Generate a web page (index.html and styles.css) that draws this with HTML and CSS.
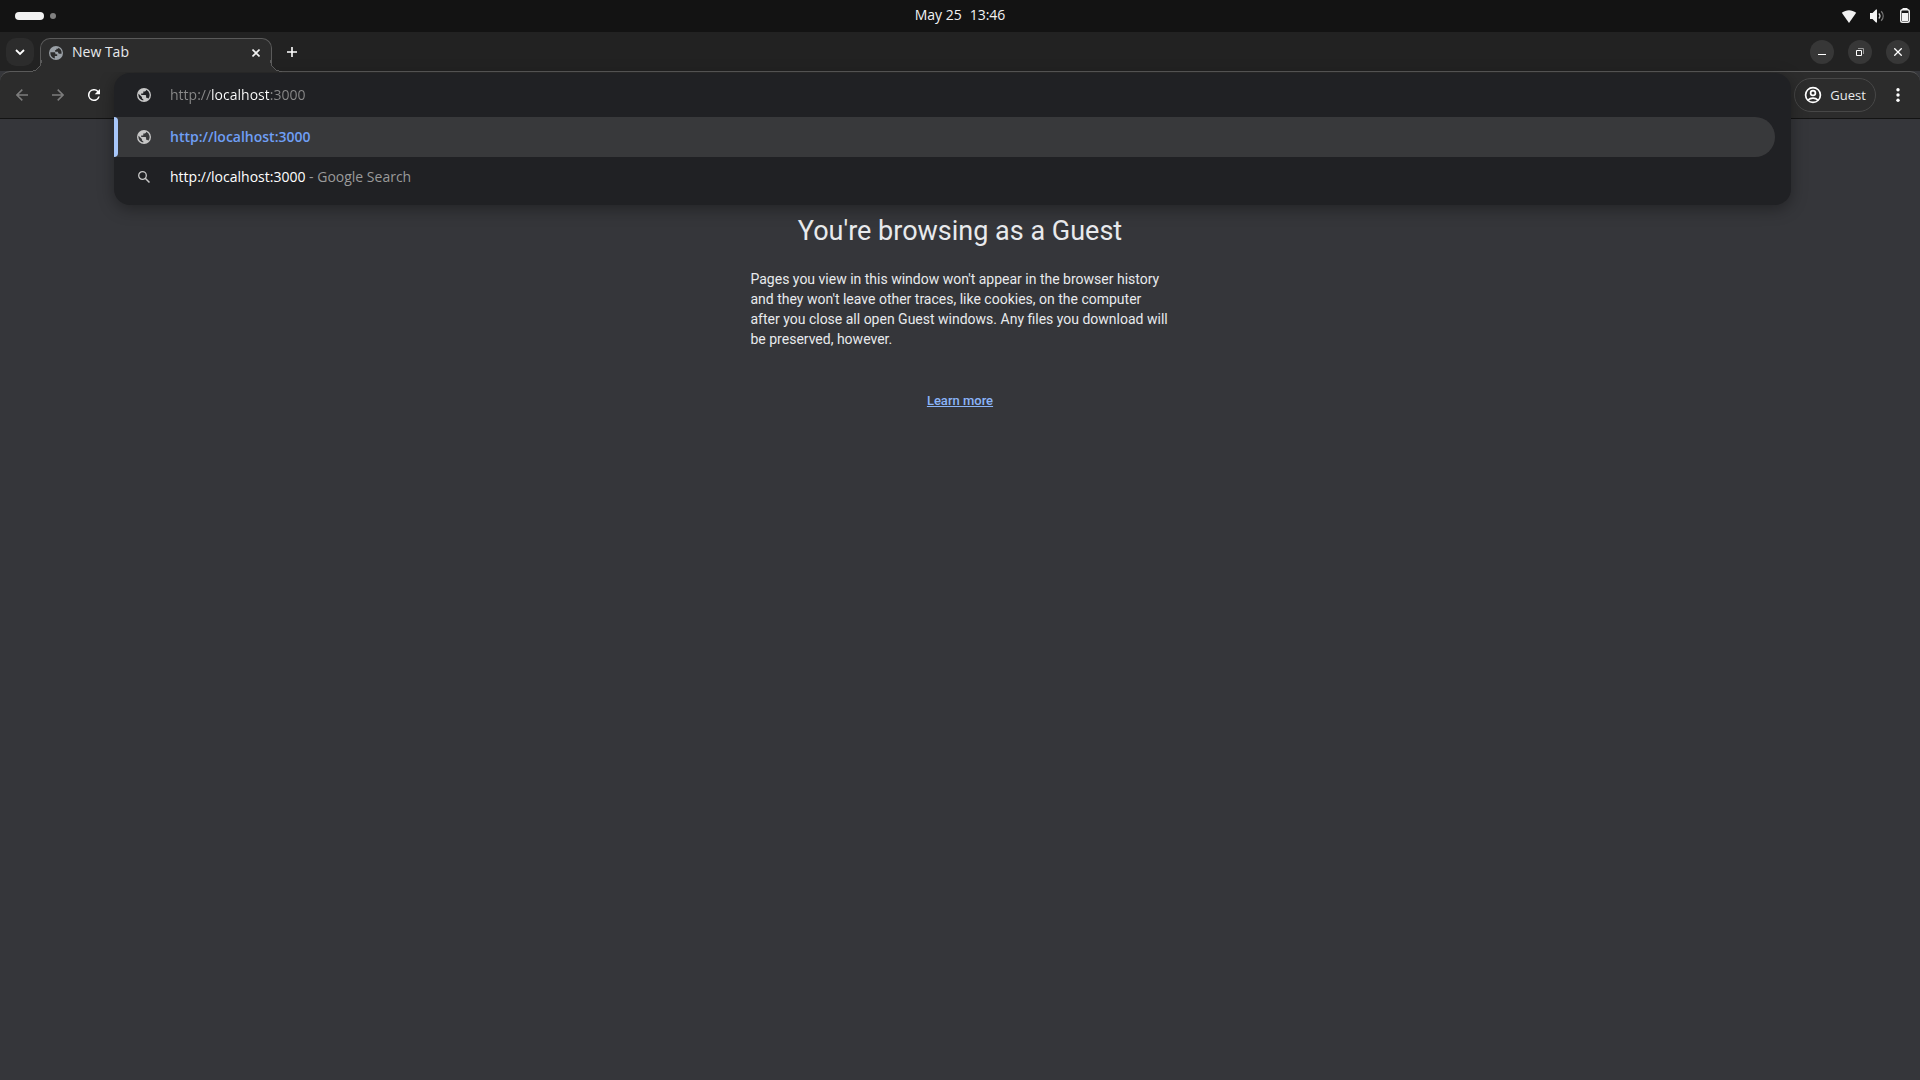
FILE: index.html
```html
<!DOCTYPE html>
<html lang="en">
<head>
<meta charset="utf-8">
<title>New Tab</title>
<link rel="stylesheet" href="styles.css">
</head>
<body>
<header class="system-bar">
  <div class="workspaces"><span class="workspace current"></span><span class="workspace"></span></div>
  <time class="clock"><span>May 25</span><span>13:46</span></time>
  <div class="status">
    <svg class="icon" width="16" height="16" viewBox="0 0 16 16"><path fill="#f2f2f2" d="M8 15 .8 4.800C3 3 5.500 2.200 8 2.200S13 3 15.200 4.800z"/></svg>
    <svg class="icon" width="16" height="16" viewBox="0 0 16 16"><path fill="#f2f2f2" d="M1 5h2.500L7 1.500h1v13H7L3.500 11H1z"/><path fill="none" stroke="#d0d0d0" stroke-width="1.300" d="M9.800 5.500c1.400 1.500 1.400 3.500 0 5"/><path fill="none" stroke="#777" stroke-width="1.300" d="M12.200 3.300c2.600 2.800 2.600 6.600 0 9.400"/></svg>
    <svg class="icon" width="16" height="16" viewBox="0 0 16 16"><path fill="#f2f2f2" d="M5.500 0h5v2h-5zM5 5h6v8H5z"/><rect x="3.700" y="1.700" width="8.600" height="12.600" rx="1.800" fill="none" stroke="#f2f2f2" stroke-width="1.400"/></svg>
  </div>
</header>

<div class="tab-strip">
  <button class="tab-search" aria-label="Search tabs"><svg class="icon" width="12" height="12" viewBox="0 0 12 12"><path fill="none" stroke="#fff" stroke-width="1.800" d="m2 4 4 4 4-4"/></svg></button>
  <div class="tab">
    <svg class="icon" width="14" height="14" viewBox="2 2 20 20"><path fill="#9aa0a6" d="M12 2a10 10 0 1 0 0 20 10 10 0 0 0 0-20zm-1.700 17.800A8 8 0 0 1 4 12c0-.3 0-.6.1-.9h5.200c1.300 0 1.800.8 1.800 1.800v.9h2.600v2.600h-3.400zM19.900 13h-3.200c-1.200 0-1.700-.8-1.700-1.700v-1h-4.200V7.700h1.700V6h2.600V4.600A8 8 0 0 1 19.900 13z"/></svg>
    <span class="tab-title">New Tab</span>
    <button class="tab-close" aria-label="Close tab"><svg class="icon" width="8" height="8" viewBox="0 0 8 8"><path stroke="#f2f2f2" stroke-width="1.600" d="m.5.5 7 7m0-7-7 7"/></svg></button>
  </div>
  <button class="new-tab" aria-label="New tab"><svg class="icon" width="10" height="10" viewBox="0 0 10 10"><path stroke="#fff" stroke-width="1.600" d="M5 0v10M0 5h10"/></svg></button>
  <div class="window-controls">
    <button aria-label="Minimize"><svg class="icon" width="8" height="8" viewBox="0 0 8 8"><path fill="#fff" d="M0 6h8v1H0z"/></svg></button>
    <button aria-label="Restore"><svg class="icon" width="8" height="8" viewBox="0 0 8 8"><path fill="none" stroke="#fff" d="M.5 2.500h5v5h-5z"/><path fill="none" stroke="#999" d="M2 .5h5.500V6"/></svg></button>
    <button aria-label="Close"><svg class="icon" width="8" height="8" viewBox="0 0 8 8"><path stroke="#fff" stroke-width="1.300" d="m.3.3 7.400 7.400m0-7.400L.3 7.700"/></svg></button>
  </div>
</div>

<div class="toolbar">
  <button class="tool" aria-label="Back"><svg class="icon" width="12" height="12" viewBox="0 0 12 12"><path fill="none" stroke="#7c7c7c" stroke-width="1.500" d="M12 6H1m5.300-5.400L.9 6l5.400 5.400"/></svg></button>
  <button class="tool" aria-label="Forward"><svg class="icon" width="12" height="12" viewBox="0 0 12 12"><path fill="none" stroke="#7c7c7c" stroke-width="1.500" d="M0 6h11M5.700.6 11.100 6l-5.400 5.400"/></svg></button>
  <button class="tool" aria-label="Reload"><svg class="icon" width="12" height="12" viewBox="4 4 16 16"><path fill="#fff" d="M17.650 6.350A8 8 0 1 0 19.730 14h-2.080A6 6 0 1 1 12 6c1.660 0 3.140.69 4.220 1.780L13 11h7V4z"/></svg></button>
  <div class="omnibox-slot">
    <div class="omnibox">
      <label class="address">
        <svg class="icon" width="14" height="14" viewBox="2 2 20 20"><path fill="#c7c7c7" d="M12 2a10 10 0 1 0 0 20 10 10 0 0 0 0-20zm-1 17.930A8 8 0 0 1 4.210 10.210L9 15v1c0 1.100.9 2 2 2zm6.900-2.540A2 2 0 0 0 16 16h-1v-3c0-.55-.45-1-1-1H8v-2h2c.55 0 1-.45 1-1V7h2c1.100 0 2-.9 2-2v-.41a8 8 0 0 1 2.900 12.800z"/></svg>
        <input class="url" type="text" value="http://localhost:3000" aria-label="Address and search bar" spellcheck="false">
      </label>
      <a class="suggestion selected" href="http://localhost:3000">
        <svg class="icon" width="14" height="14" viewBox="2 2 20 20"><path fill="#c7c7c7" d="M12 2a10 10 0 1 0 0 20 10 10 0 0 0 0-20zm-1 17.930A8 8 0 0 1 4.210 10.210L9 15v1c0 1.100.9 2 2 2zm6.900-2.540A2 2 0 0 0 16 16h-1v-3c0-.55-.45-1-1-1H8v-2h2c.55 0 1-.45 1-1V7h2c1.100 0 2-.9 2-2v-.41a8 8 0 0 1 2.900 12.800z"/></svg>
        <span class="match">http://localhost:3000</span>
      </a>
      <a class="suggestion" href="#search">
        <svg class="icon" width="14" height="14" viewBox="0 0 14 14"><circle cx="5.500" cy="5.500" r="3.800" fill="none" stroke="#c7c7c7" stroke-width="1.300"/><path stroke="#c7c7c7" stroke-width="1.500" d="m8.200 8.200 4.300 4.300"/></svg>
        <span>http://localhost:3000<span class="hint"> - Google Search</span></span>
      </a>
    </div>
  </div>
  <button class="profile"><svg class="icon" width="18" height="18" viewBox="0 0 18 18"><g fill="none" stroke="#fff" stroke-width="1.700"><circle cx="9" cy="9" r="7.400"/><circle cx="9" cy="7" r="2.400"/><path d="M4 14c2.800-2.600 7.200-2.600 10 0"/></g></svg><span>Guest</span></button>
  <button class="menu" aria-label="Menu"><svg class="icon" width="4" height="14" viewBox="0 0 4 14"><g fill="#fff"><circle cx="2" cy="1.800" r="1.700"/><circle cx="2" cy="7" r="1.700"/><circle cx="2" cy="12.200" r="1.700"/></g></svg></button>
</div>

<main class="page">
  <h1>You're browsing as a Guest</h1>
  <p>Pages you view in this window won't appear in the browser history and they won't leave other traces, like cookies, on the computer after you close all open Guest windows. Any files you download will be preserved, however.</p>
  <a class="learn" href="#learn">Learn more</a>
</main>
</body>
</html>
```
FILE: styles.css
```css
* { box-sizing: border-box; }

body {
  margin: 0;
  min-height: 100vh;
  display: flex;
  flex-direction: column;
  background: #35363a;
  color: #e8eaed;
  font-family: "Open Sans", "Noto Sans", sans-serif;
  font-size: 14px;
  line-height: 20px;
}

button {
  display: flex;
  align-items: center;
  justify-content: center;
  padding: 0;
  border: 0;
  background: none;
  color: inherit;
  font: inherit;
}

.icon { display: block; flex: none; }

.system-bar {
  display: grid;
  grid-template-columns: 1fr auto 1fr;
  align-items: center;
  height: 32px;
  padding: 0 7px 0 15px;
  background: #131313;
  color: #f2f2f2;
}
.workspaces { display: flex; align-items: center; gap: 6px; }
.workspace { width: 6px; height: 6px; border-radius: 3px; background: #808080; }
.workspace.current { width: 29px; height: 8px; border-radius: 4px; background: #f2f2f2; }
.clock { display: flex; gap: 8px; padding: 0 8px 2px 0; }
.status { display: flex; justify-content: flex-end; gap: 12px; }

.tab-strip {
  display: flex;
  align-items: center;
  height: 39px;
  padding: 0 10px 0 6px;
  background: #222;
}
.tab-search { width: 28px; height: 28px; border-radius: 10px; background: #2c2c2c; }
.tab {
  position: relative;
  z-index: 1;
  align-self: flex-end;
  display: flex;
  align-items: center;
  gap: 9px;
  width: 232px;
  height: 34px;
  margin: 0 0 -1px 6px;
  padding: 0 6px 6px 8px;
  border: 1px solid #5a5a5a;
  border-bottom: 0;
  border-radius: 10px 10px 0 0;
  background: #2c2c2c;
}
.tab::before,
.tab::after {
  content: "";
  position: absolute;
  bottom: 0;
  width: 12px;
  height: 12px;
}
.tab::before {
  right: calc(100% - 1px);
  background: radial-gradient(circle at 0 0, transparent 11px, #5a5a5a 11px, #5a5a5a 12px, #2c2c2c 12px);
}
.tab::after {
  left: calc(100% - 1px);
  background: radial-gradient(circle at 100% 0, transparent 11px, #5a5a5a 11px, #5a5a5a 12px, #2c2c2c 12px);
}
.tab-title { flex: 1; padding-bottom: 2px; }
.tab-close { width: 18px; height: 18px; }
.new-tab { width: 28px; height: 28px; margin-left: 6px; }
.window-controls { display: flex; gap: 14px; margin-left: auto; }
.window-controls button { width: 24px; height: 24px; border-radius: 12px; background: #373737; }

.toolbar {
  display: flex;
  align-items: center;
  height: 48px;
  padding: 0 12px 0 4px;
  border-top: 1px solid #5a5a5a;
  border-bottom: 1px solid #131313;
  border-radius: 10px 10px 0 0;
  background: #2c2c2c;
}
.tool { width: 36px; height: 36px; }
.omnibox-slot { position: relative; flex: 1; align-self: stretch; margin: 0 3px 0 2px; }
.omnibox {
  position: absolute;
  inset: 1px 0 auto;
  padding-bottom: 8px;
  border-radius: 16px;
  background: #202124;
  box-shadow: 0 4px 16px rgba(0, 0, 0, 0.35);
}
.address,
.suggestion {
  display: flex;
  align-items: center;
  gap: 19px;
  height: 40px;
  padding-left: 23px;
  color: #fff;
  text-decoration: none;
}
.address { height: 44px; }
.url {
  flex: 1;
  padding: 0;
  border: 0;
  outline: 0;
  font: inherit;
  color: transparent;
  background: linear-gradient(90deg, #8a8a8a 42px, #fff 42px, #fff 99px, #8a8a8a 99px);
  background-clip: text;
  -webkit-background-clip: text;
}
.selected {
  position: relative;
  margin-right: 16px;
  border-radius: 0 20px 20px 0;
  background: #38393b;
}
.selected::before {
  content: "";
  position: absolute;
  inset: 0 auto 0 0;
  width: 4px;
  border-radius: 0 4px 4px 0;
  background: #a8c7fa;
}
.match { color: #6f9ff5; font-weight: 600; }
.hint { color: #9a9a9a; }
.profile {
  gap: 8px;
  width: 82px;
  height: 34px;
  border: 1px solid #474747;
  border-radius: 17px;
  font-size: 13px;
}
.menu { width: 20px; height: 28px; margin-left: 12px; }

.page {
  display: flex;
  flex-direction: column;
  align-items: center;
  padding-top: 96px;
  font-family: Roboto, sans-serif;
}
.page h1 { margin: 0; font-size: 27px; font-weight: 400; line-height: 32px; }
.page p { width: 419px; margin: 22px 0 42px; }
.learn { color: #8ab4f8; font-size: 13px; font-weight: 500; }
```
